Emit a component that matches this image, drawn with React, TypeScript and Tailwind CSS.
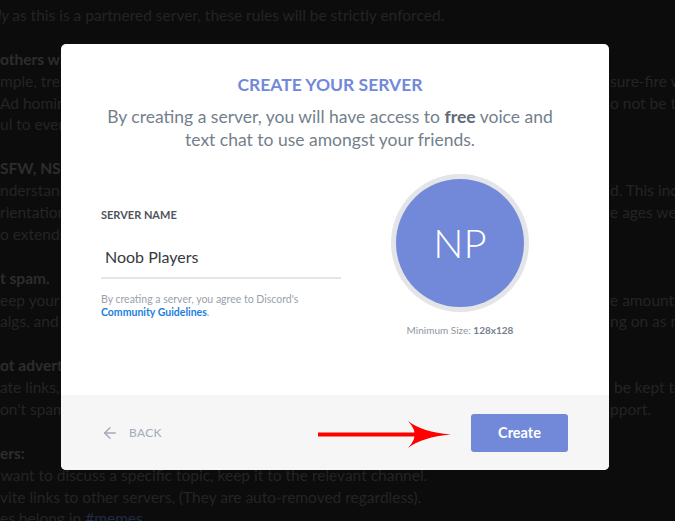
import { ArrowLeft } from 'lucide-react';

const bgLines: { left: string; right?: string; bold?: boolean; full?: boolean }[] = [
  { left: 'as this is a partnered server, these rules will be strictly enforced.', full: true },
  { left: '' },
  { left: 'others wit', bold: true },
  { left: 'mple, trea', right: 'sure-fire way' },
  { left: 'Ad homine', right: 'o not be toxic' },
  { left: 'ul to every' },
  { left: '' },
  { left: 'SFW, NSFW', bold: true },
  { left: 'nderstand', right: 'd. This includes' },
  { left: 'rientation,', right: 'e ages we' },
  { left: 'o extends t' },
  { left: '' },
  { left: 't spam.', bold: true },
  { left: 'eep your m', right: 'e amounts' },
  { left: 'algs, and e', right: 'ng on as much' },
  { left: '' },
  { left: 'ot advertis', bold: true },
  { left: 'ate links, p', right: ' be kept to' },
  { left: "on't spam D", right: 'pport.' },
  { left: '' },
  { left: 'ers:', bold: true },
  { left: ' want to discuss a specific topic, keep it to the relevant channel.', full: true },
  { left: 'vite links to other servers, (They are auto-removed regardless).', full: true },
  { left: 'es belong in ', full: true },
];

function Background() {
  return (
    <div className="pt-[5px] text-[15.5px] leading-[21.9px] text-[#242425] font-['Lato',sans-serif]">
      {bgLines.map((l, i) => (
        <div key={i} className="flex h-[21.9px] whitespace-pre">
          {l.full ? (
            <div className={i === 21 ? 'ml-[-3px]' : ''}>
              {i === 0 && <span className="italic ml-[-2px]">ly </span>}
              {l.left}
              {i === 23 && <span className="text-[#212b42]">#memes</span>}
            </div>
          ) : (
            <>
              <div className={`w-[61px] shrink-0 overflow-hidden ${l.bold ? 'font-bold text-[#2d2d2e]' : ''}`}>
                {l.left}
              </div>
              <div className="ml-[549px] overflow-hidden">{l.right ?? ''}</div>
            </>
          )}
        </div>
      ))}
    </div>
  );
}

function RedArrow() {
  return (
    <svg className="absolute left-[318px] top-[420px]" width="134" height="30" viewBox="0 0 134 30">
      <rect x="0" y="12.5" width="100" height="4" fill="#f00" />
      <path d="M90 1 Q104 12 133 14.5 Q104 17 90 28 Q98 19 96 14.5 Q98 10 90 1 Z" fill="#f00" />
    </svg>
  );
}

export default function App() {
  return (
    <div className="relative w-[675px] h-[521px] overflow-hidden bg-[#0c0c0c]">
      <Background />

      <div className="absolute left-[61px] top-[44px] w-[548px] h-[426px] rounded-[5px] bg-white overflow-hidden flex flex-col font-['Lato',sans-serif]">
        <div className="flex-1 pt-[29px] pl-10 pr-[30px]">
          <div className="pr-[20px] flex flex-col items-center">
            <h2 className="text-center text-[17.5px] font-bold text-[#7289da] leading-[24px]">
              CREATE YOUR SERVER
            </h2>
            <p className="mt-[8px] w-[456px] shrink-0 text-center text-[17.5px] leading-[23px] text-[#737f8d]">
              By creating a server, you will have access to{' '}
              <span className="font-bold text-[#5f6b78]">free</span> voice and text chat to use amongst your friends.
            </p>
          </div>

          <div className="mt-[23px] flex">
            <div className="w-[240px] pt-[34px]">
              <div className="text-[11px] font-bold text-[#4f545c] leading-[14px]">SERVER NAME</div>
              <div className="mt-[24px] pl-[4px] pb-[9px] border-b-2 border-[#e3e5e8] text-[16px] text-[#36393f] leading-[22px]">
                Noob Players
              </div>
              <p className="mt-[14px] text-[10.5px] leading-[13px] text-[#99a1aa]">
                By creating a server, you agree to Discord's
                <br />
                <span className="font-bold text-[#1a7fde]">Community Guidelines</span>.
              </p>
            </div>

            <div className="flex-1 flex flex-col items-center">
              <div className="w-[138px] h-[138px] rounded-full bg-[#e3e5e8] flex items-center justify-center">
                <div className="w-[128px] h-[128px] rounded-full bg-[#7289da] flex items-center justify-center text-white text-[40px] font-light leading-none">
                  NP
                </div>
              </div>
              <div className="mt-[11px] text-[10px] text-[#8e96a0] leading-[14px]">
                Minimum Size: <span className="font-bold text-[#737f8d]">128x128</span>
              </div>
            </div>
          </div>
        </div>

        <div className="h-[75px] bg-[#f6f6f7] flex items-center justify-between pl-10 pr-[41px]">
          <button className="flex items-center gap-[10px] text-[#a3acb7] text-[12px] tracking-[0.3px] mt-[1px]">
            <ArrowLeft className="w-[18px] h-[18px]" strokeWidth={2} />
            BACK
          </button>
          <button className="w-[97px] h-[38px] rounded-[3px] bg-[#7289da] text-white text-[14.5px] font-bold mt-[1px]">
            Create
          </button>
        </div>
      </div>

      <RedArrow />
    </div>
  );
}
